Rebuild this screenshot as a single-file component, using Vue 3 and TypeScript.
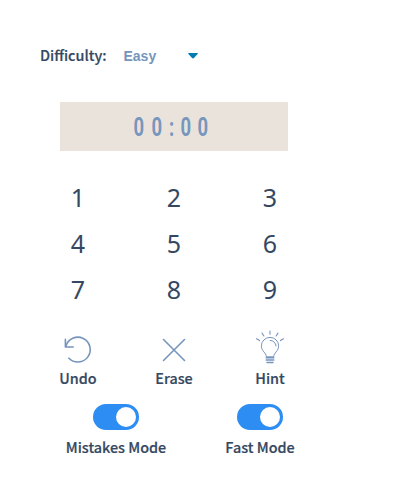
<script setup lang="ts">
import { ref } from 'vue'

const digits: number[] = [1, 2, 3, 4, 5, 6, 7, 8, 9]
const time = ref<string>('00:00')
const level = ref<string>('Easy')
const modes = ref<{ label: string; on: boolean }[]>([
  { label: 'Mistakes Mode', on: true },
  { label: 'Fast Mode', on: true },
])
</script>

<template>
  <main class="panel">
    <div class="difficulty">
      <span class="label">Difficulty:</span>
      <button class="select" type="button">
        <span>{{ level }}</span>
        <svg class="caret" width="10" height="6" viewBox="0 0 10 6"><path d="M.8 0h8.4q1.1 0 .4.9L6.2 4.8q-1.2 1.2-2.4 0L.4.9Q-.3 0 .8 0z" fill="#007cb2" /></svg>
      </button>
    </div>

    <div class="timer">
      <span v-for="(c, i) in time" :key="i" class="char" :class="{ colon: c === ':' }">{{ c }}</span>
    </div>

    <div class="digits">
      <button v-for="d in digits" :key="d" class="digit" type="button">{{ d }}</button>
    </div>

    <div class="actions">
      <button class="action" type="button">
        <svg width="30" height="34" viewBox="0 0 30 34" fill="none" stroke="#7695bc" stroke-width="1.6" stroke-linecap="round" stroke-linejoin="round">
          <path d="M5.9 26.2A12.4 12.4 0 1 0 2.9 14.2" />
          <path d="M2.4 7.4V15H10.2" />
        </svg>
        <span class="label">Undo</span>
      </button>
      <button class="action" type="button">
        <svg width="30" height="34" viewBox="0 0 30 34" fill="none" stroke="#7695bc" stroke-width="1.6" stroke-linecap="round">
          <path d="M4.5 7.5L25.5 28.5M25.5 7.5L4.5 28.5" />
        </svg>
        <span class="label">Erase</span>
      </button>
      <button class="action" type="button">
        <svg width="30" height="34" viewBox="0 0 30 34" fill="none" stroke="#7695bc" stroke-width="1" stroke-linecap="round">
          <path d="M11.3 24.4C11.3 20.5 6.4 19.6 6.4 13.8A8.6 8.4 0 0 1 23.6 13.8C23.6 19.6 18.7 20.5 18.7 24.4Z" />
          <path d="M15.2 8.4A5.8 5.6 0 0 1 21 13.9" />
          <path d="M11.2 25.8H18.8M11.2 28H18.8M12 30.6H18" stroke-width="1.5" />
          <path d="M15-1V2.2M7 1.1L8.9 4M23 1.1L21.1 4M1.5 6.8L4.6 8.6M28.5 6.8L25.4 8.6" stroke-width="1.1" />
        </svg>
        <span class="label">Hint</span>
      </button>
    </div>

    <div class="modes">
      <div v-for="m in modes" :key="m.label" class="mode">
        <button class="switch" :class="{ on: m.on }" type="button" role="switch" :aria-checked="m.on" @click="m.on = !m.on">
          <span class="knob"></span>
        </button>
        <span class="label">{{ m.label }}</span>
      </div>
    </div>
  </main>
</template>

<style>
body {
  background: #fff;
}
</style>

<style scoped>
.panel {
  width: 288px;
  margin-left: 30px;
  padding-top: 40px;
  font-family: "Noto Sans CJK SC", sans-serif;
  color: #344861;
}
button {
  border: 0;
  padding: 0;
  background: none;
  color: inherit;
  font: inherit;
}
svg {
  display: block;
  overflow: visible;
}
.label {
  font-size: 14.4px;
  font-weight: 500;
  line-height: 22px;
  white-space: nowrap;
  -webkit-text-stroke: 0.2px currentColor;
}
.difficulty {
  display: flex;
  align-items: center;
  height: 32px;
  padding-left: 10px;
}
.difficulty .label {
  width: 67px;
  padding-bottom: 2px;
}
.select {
  display: flex;
  align-items: center;
  justify-content: space-between;
  width: 74px;
  margin-left: 16.5px;
  font: bold 14px/20px "Liberation Sans", sans-serif;
  color: #7695bc;
}
.timer {
  display: flex;
  justify-content: center;
  align-items: center;
  height: 49px;
  margin: 30px 30px 0;
  padding: 2px 6px 0 0;
  box-sizing: border-box;
  background: #eae3dc;
  font: 700 26px/47px Roboto, sans-serif;
  color: #7896bd;
}
.char {
  width: 17.7px;
  display: flex;
  justify-content: center;
  transform: scaleX(0.71);
}
.colon {
  width: 11px;
}
.digits {
  display: grid;
  grid-template-columns: repeat(3, 96px);
  grid-auto-rows: 46px;
  margin-top: 23px;
}
.digit {
  font: 25px/46px "Noto Sans", sans-serif;
}
.actions {
  display: grid;
  grid-template-columns: repeat(3, 96px);
  margin-top: 20px;
}
.action {
  display: flex;
  flex-direction: column;
  align-items: center;
}
.action .label {
  margin-top: 1px;
}
.modes {
  display: grid;
  grid-template-columns: 144px 144px;
  margin-top: 15px;
  padding-left: 14px;
}
.mode {
  display: flex;
  flex-direction: column;
  align-items: center;
}
.mode .label {
  margin-top: 6px;
}
.switch {
  display: flex;
  width: 46px;
  height: 26px;
  padding: 3px;
  border-radius: 13px;
  background: #ccc;
}
.switch.on {
  justify-content: flex-end;
  background: #2d8df3;
}
.knob {
  width: 20px;
  height: 20px;
  border-radius: 50%;
  background: #fff;
}
</style>
